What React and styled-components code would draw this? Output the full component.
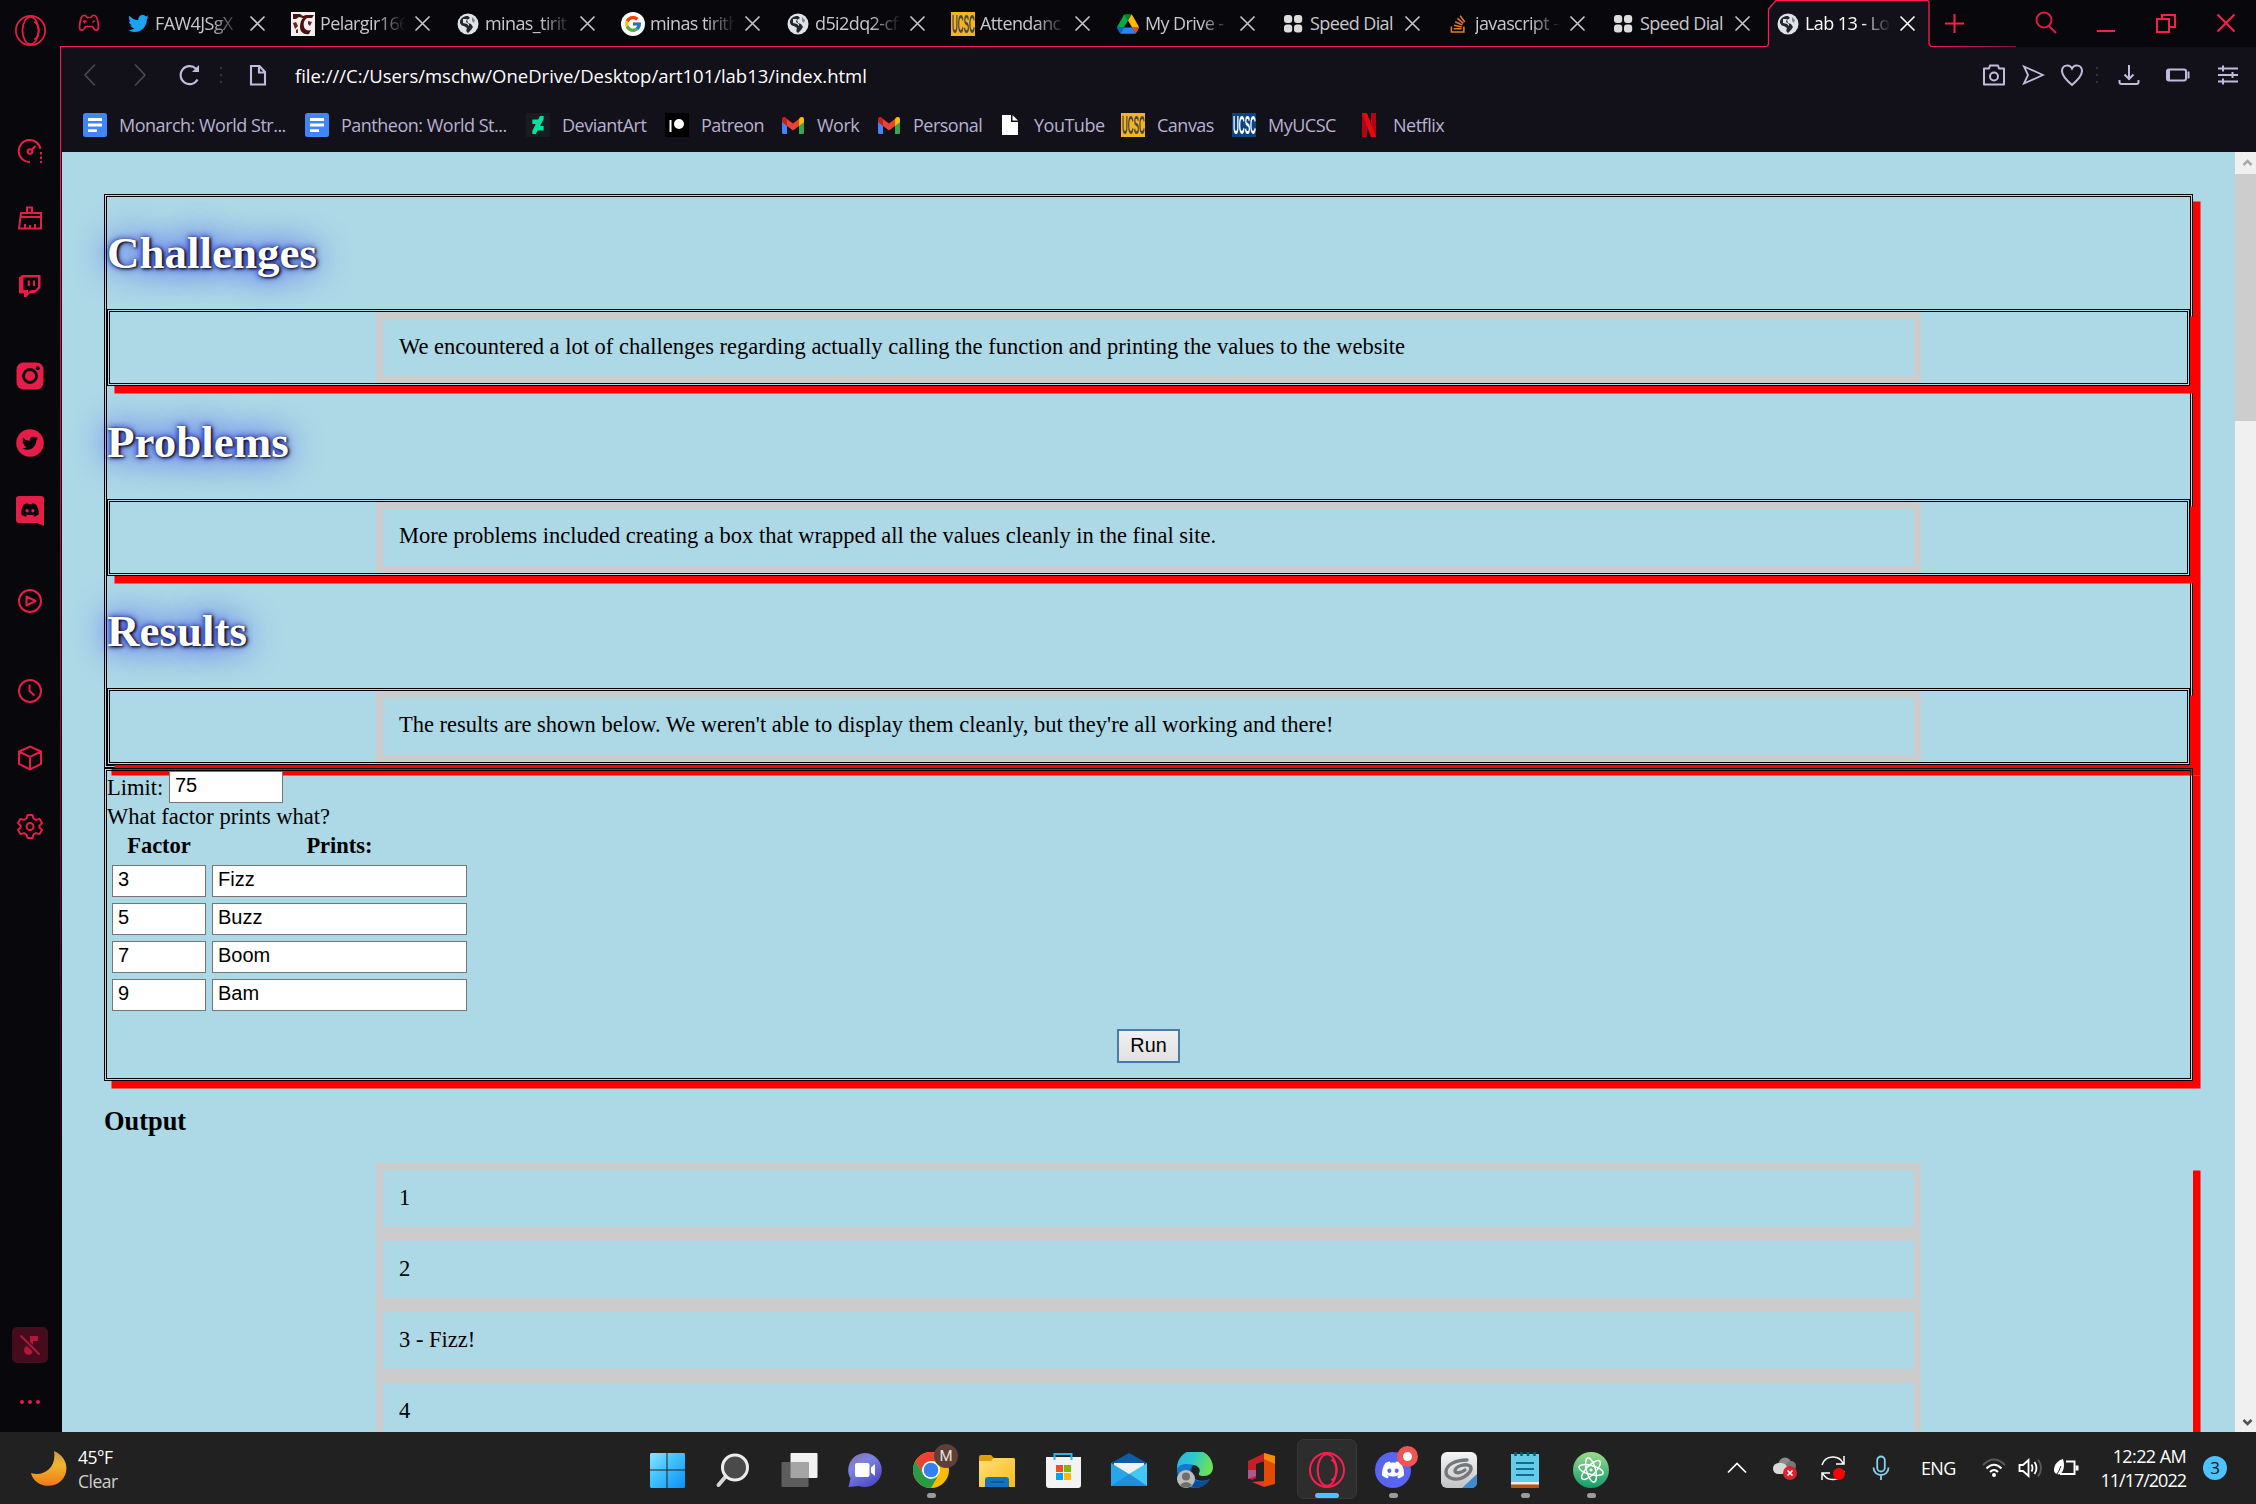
import React from "react";
import styled, { createGlobalStyle, css } from "styled-components";
import {
  FaTwitter, FaInstagram, FaDiscord, FaStackOverflow, FaDeviantart,
} from "react-icons/fa";
import { FcGoogle } from "react-icons/fc";

const ui = `"Open Sans", "Noto Sans", sans-serif`;
const serif = `"Liberation Serif", "Times New Roman", serif`;
const arial = `"Liberation Sans", Arial, sans-serif`;
const red = "#fa1e4e";
const sideRed = "#e61d49";
const lav = "#c3bbdb";

const Global = createGlobalStyle`
  * { box-sizing: border-box; }
  html, body { margin: 0; padding: 0; overflow: hidden; background: #08070b; }
`;

const Screen = styled.div`
  width: 2256px;
  height: 1504px;
  display: grid;
  grid-template-rows: 1432px 72px;
  overflow: hidden;
  font-family: ${ui};
`;
const Browser = styled.div`
  display: grid;
  grid-template-columns: 60px 2196px;
  min-height: 0;
  background: #08070b;
`;

/* Sidebar */
const Sidebar = styled.aside`
  display: flex;
  flex-direction: column;
  align-items: center;
  padding-top: 14px;
  color: ${sideRed};
`;
const SideItem = styled.div`
  display: flex;
  align-items: center;
  justify-content: center;
  height: 32px;
  width: 60px;
  flex: none;
  margin-top: ${(p) => p.$gap || 0}px;
`;
const MuteTile = styled.div`
  width: 36px;
  height: 36px;
  border-radius: 5px;
  background: #440c1c;
  color: #b3183a;
  display: flex;
  align-items: center;
  justify-content: center;
  margin-top: 485px;
`;

/* Browser chrome */
const Main = styled.div`
  display: grid;
  grid-template-rows: 47px 105px 1280px;
  min-width: 0;
`;
const TabBar = styled.div`
  display: flex;
  height: 47px;
  background: linear-gradient(${red}, ${red}) 0 46px / 1707px 1px no-repeat,
    linear-gradient(90deg, ${red}, #7d1530) 1870px 46px / 86px 1px no-repeat, #08070b;
`;
const Pinned = styled.div`
  width: 58px;
  height: 46px;
  padding-left: 18px;
  display: flex;
  align-items: center;
`;
const TabBox = styled.div`
  width: 165px;
  height: 47px;
  padding: 0 0 0 8px;
  display: flex;
  align-items: center;
  color: ${(p) => (p.$active ? "#fff" : "#c9c7cb")};
  position: relative;
`;
const ActiveShape = styled.svg`
  position: absolute;
  left: -1px;
  top: 0;
`;
const TabIcon = styled.div`
  width: 24px;
  height: 24px;
  display: flex;
  align-items: center;
  justify-content: center;
  position: relative;
`;
const TabText = styled.div`
  margin-left: 5px;
  width: 86px;
  height: 28px;
  line-height: 27px;
  font-size: 18px;
  letter-spacing: -0.6px;
  white-space: nowrap;
  position: relative;
  ${(p) => p.$fade && css`mask-image: linear-gradient(90deg, #000 56px, transparent 86px);`}
`;
const TabClose = styled.svg`
  margin-left: 8px;
  position: relative;
`;
const NewTab = styled.svg`margin: 14px 0 0 12px;`;
const WinBtns = styled.div`
  display: flex;
  margin-left: auto;
  height: 46px;
  align-items: center;
  padding-right: 20px;
  gap: 40px;
`;
const SearchBtn = styled.svg`margin-right: -2px;`;

const Bars = styled.div`
  background: #121019;
  border-left: 1px solid ${red};
`;
const AddressBar = styled.div`
  height: 56px;
  display: flex;
  align-items: center;
  padding: 0 17px 0 18px;
  color: ${lav};
`;
const Url = styled.div`
  margin-left: 27px;
  font-size: 18.5px;
  letter-spacing: -0.02px;
  color: #fff;
  white-space: nowrap;
`;
const Spacer = styled.div`flex: 1;`;
const NavIcon = styled.svg`
  flex: none;
  margin-left: ${(p) => p.$ml || 0}px;
`;
const Bookmarks = styled.div`
  display: flex;
  align-items: center;
  height: 44px;
  padding-left: 22px;
`;
const Bookmark = styled.div`
  width: ${(p) => p.$w}px;
  display: flex;
  align-items: center;
  gap: 12px;
  flex: none;
  font-size: 18px;
  letter-spacing: -0.5px;
  color: #b9b0d2;
  white-space: nowrap;
`;
const Favicon = styled.div`
  width: 24px;
  height: 24px;
  flex: none;
  display: flex;
  align-items: center;
  justify-content: center;
  background: ${(p) => p.$bg || "transparent"};
  color: ${(p) => p.$fg || "#fff"};
`;

/* Page viewport */
const Viewport = styled.div`
  display: grid;
  grid-template-columns: 2173px 21px;
  height: 1280px;
  border-left: 1px solid;
  border-image: linear-gradient(${red}, #8c1532 45%, #0a0408 85%) 1;
  padding-left: 1px;
  background: #08070b;
  overflow: hidden;
`;
const Page = styled.div`
  background: #add8e6;
  height: 1280px;
  overflow: hidden;
  padding: 42px 42px 0;
  font-family: ${serif};
  font-size: 22.5px;
  color: #000;
`;
const boxed = css`
  border: 3px double #000;
  box-shadow: 7.5px 7.5px 0 0 #f00;
`;
const Outer = styled.section`
  ${boxed}
  height: 574px;
`;
const Heading = styled.h1`
  margin: 0;
  height: 112.3px;
  padding-top: 29.7px;
  line-height: 52px;
  font-size: 45px;
  font-weight: bold;
  color: #fff;
  text-shadow: 1.4px 1.4px 2.8px #000, 0 0 35px blue, 0 0 7px darkblue;
`;
const Inner = styled.div`
  ${boxed}
  height: 77px;
`;
const Para = styled.p`
  margin: 0 auto;
  width: 1545px;
  height: 71px;
  border: 7px solid #ccc;
  padding: 14.5px 16px;
  line-height: 26px;
  white-space: nowrap;
`;
const Form = styled.section`
  ${boxed}
  height: 313px;
  display: flex;
  flex-direction: column;
`;
const Line = styled.div`
  display: flex;
  align-items: center;
  height: ${(p) => p.$h}px;
  line-height: 25px;
`;
const Field = styled.input`
  width: ${(p) => p.$w}px;
  height: 32px;
  margin: 0;
  padding: 0 5px 3px;
  border: 1px solid #767676;
  border-radius: 0;
  background: #fff;
  color: #000;
  outline: none;
  font: 20px ${arial};
`;
const FactorGrid = styled.div`
  display: grid;
  grid-template-columns: 94px 255px;
  grid-template-rows: 30px repeat(4, 32px);
  column-gap: 6px;
  row-gap: 6px;
  padding: 0 0 0 5px;
`;
const Th = styled.div`
  font-weight: bold;
  text-align: center;
  line-height: 33px;
`;
const RunButton = styled.button`
  align-self: center;
  margin-top: 18px;
  width: 63px;
  height: 34px;
  padding: 0 0 1px;
  font: 19.8px ${arial};
  background: linear-gradient(#f0f0f0, #e1e1e1);
  border: 2px solid #4a7ba6;
  border-radius: 0;
  color: #000;
`;
const OutputTitle = styled.h3`
  margin: 26px 0;
  line-height: 29px;
  height: 30px;
  font-size: 26.4px;
`;
const OutputBox = styled.div`
  box-shadow: 7.5px 7.5px 0 0 #f00;
`;
const Scrollbar = styled.div`
  background: #f0f0f0;
  display: flex;
  flex-direction: column;
  align-items: center;
`;
const Arrow = styled.svg`
  height: 22px;
  width: 21px;
  flex: none;
  padding-left: 2px;
`;
const Thumb = styled.div`
  width: 21px;
  height: 247px;
  background: #cdcdcd;
`;

/* Taskbar */
const Taskbar = styled.footer`
  background: #212121;
  display: grid;
  grid-template-columns: 634px 991px 631px;
  color: #fff;
  font-size: 18px;
`;
const Weather = styled.div`
  display: flex;
  align-items: center;
  padding: 1px 0 0 30px;
  gap: 11px;
  line-height: 24px;
  letter-spacing: -0.5px;
  font-size: 17.5px;
`;
const Dim = styled.div`color: #cfcfcf;`;
const Apps = styled.div`display: flex;`;
const App_ = styled.div`
  width: 66px;
  height: 72px;
  padding-top: 7px;
  display: flex;
  justify-content: center;
`;
const Tile = styled.div`
  width: 60px;
  height: 60px;
  border-radius: 7px;
  display: flex;
  flex-direction: column;
  align-items: center;
  padding-top: ${(p) => (p.$active ? 4 : 5)}px;
  ${(p) => p.$active && css`background: #2d2d2d; border: 1px solid #383838;`}
`;
const TileIcon = styled.div`
  height: 49px;
  flex: none;
  display: flex;
  align-items: flex-start;
  padding-top: 8px;
`;
const Mark = styled.div`
  width: ${(p) => (p.$active ? 24 : 9)}px;
  height: 5px;
  border-radius: 3px;
  background: ${(p) => (p.$active ? "#4cc2ff" : "#9b9b9b")};
`;
const Tray = styled.div`
  display: flex;
  align-items: center;
  padding: 0 29px 0 102px;
`;
const TrayIcon = styled.svg`
  flex: none;
  margin-right: ${(p) => p.$mr}px;
`;
const Lang = styled.div`
  width: 36px;
  margin-right: 25px;
  letter-spacing: -0.7px;
  font-size: 18px;
`;
const Clock = styled.div`
  margin-left: auto;
  text-align: right;
  line-height: 24px;
  letter-spacing: -0.6px;
  font-size: 18px;
  white-space: nowrap;
`;
const DateLine = styled.div`letter-spacing: -1px;`;
const Count = styled.div`
  width: 24px;
  height: 24px;
  margin-left: 17px;
  border-radius: 50%;
  background: #4cc2ff;
  color: #111;
  font-size: 17px;
  line-height: 24px;
  text-align: center;
`;

/* Icons */
const s = (w) => ({ fill: "none", stroke: "currentColor", strokeWidth: w });
const OperaMark = ({ size, color, w = 2 }) => (
  <svg width={size} height={size} viewBox="0 0 36 36" fill="none" stroke={color} strokeWidth={w}>
    <circle cx="18" cy="18" r="17" />
    <ellipse cx="18" cy="18" rx="9.3" ry="15.8" />
    <path d="M22.5 7.5c7 5 7 16 0 21" />
  </svg>
);
const Globe = () => (
  <svg width="22" height="22" viewBox="0 0 22 22">
    <circle cx="11" cy="11" r="10.5" fill="#dfe3e8" />
    <path d="M3 8c1-3 4-5 8-5l2 2-3 2 1 3 3 1 2 3-2 3-3 3c-2-1-2-3-1-5l-3-2c-2 0-3-1-4-3z" fill="#23262b" />
    <path d="M6 6l4 0-1 3 3 2 0 2-2-2-4-1z" fill="#dfe3e8" />
    <path d="M15 4l3 3-1 3-2-2z" fill="#23262b" opacity=".5" />
  </svg>
);
const UcscText = styled.span`
  font: bold 25px/24px "Liberation Sans", sans-serif;
  letter-spacing: -0.5px;
  display: block;
  transform: scaleX(0.33);
`;
const Ucsc = ({ blue }) => (
  <Favicon $bg={blue ? "#0b4484" : "#f4b322"} $fg={blue ? "#fff" : "#4b4a3c"}><UcscText>UCSC</UcscText></Favicon>
);
const SpeedDial = () => (
  <svg width="20" height="20" viewBox="0 0 20 20" fill="#dcdcdc">
    {[[1, 1], [11, 1], [1, 10.5], [11, 10.5]].map(([x, y]) => <rect key={x + "-" + y} x={x} y={y} width="8.2" height="8" rx="3" />)}
  </svg>
);
const Drive = () => (
  <svg width="22" height="20" viewBox="0 0 87.3 78">
    <path fill="#0066da" d="m6.6 66.85 3.85 6.65c.8 1.4 1.95 2.5 3.3 3.3l13.75-23.8h-27.5c0 1.55.4 3.1 1.2 4.5z" />
    <path fill="#00ac47" d="m43.65 25-13.75-23.8c-1.35.8-2.5 1.9-3.3 3.3l-25.4 44a9 9 0 0 0-1.2 4.5h27.5z" />
    <path fill="#ea4335" d="m73.55 76.8c1.35-.8 2.5-1.9 3.3-3.3l1.6-2.75 7.65-13.25c.8-1.4 1.2-2.95 1.2-4.5h-27.5l5.85 11.5z" />
    <path fill="#00832d" d="m43.65 25 13.75-23.8c-1.35-.8-2.9-1.2-4.5-1.2h-18.5c-1.6 0-3.15.45-4.5 1.2z" />
    <path fill="#2684fc" d="m59.8 53h-32.3l-13.75 23.8c1.35.8 2.9 1.2 4.5 1.2h50.8c1.6 0 3.15-.45 4.5-1.2z" />
    <path fill="#ffba00" d="m73.4 26.5-12.7-22c-.8-1.4-1.95-2.5-3.3-3.3l-13.75 23.8 16.15 28h27.45c0-1.55-.4-3.1-1.2-4.5z" />
  </svg>
);
const Pelargir = () => (
  <svg width="24" height="24" viewBox="0 0 24 24">
    <rect width="24" height="24" fill="#f3efee" />
    <path d="M2 2h7l3 2 3-1h8l-2 3h-5c-3 2-4 5-3 9 1 3 4 4 7 3l-2 4c-5 1-9-2-9-7 0-4 1-7 3-9L8 5 5 7H2z" fill="#4a1212" />
    <path d="M2 11l3-1 2 4-3 3zM5 18l2-1v4H5zM17 9l4 1-2 4-2-2z" fill="#6b2424" />
  </svg>
);
const Docs = () => (
  <svg width="24" height="24" viewBox="0 0 24 24">
    <rect width="24" height="24" rx="2.5" fill="#4285f4" />
    <path d="M5 6.5h14M5 12h14M5 17.7h9" stroke="#fff" strokeWidth="2.8" />
  </svg>
);
const Gmail = () => (
  <svg width="22" height="17" viewBox="0 0 22 17">
    <path d="M0 3v12.500a1.500 1.500 0 0 0 1.500 1.500H5V8z" fill="#4285f4" />
    <path d="M22 3v12.500a1.500 1.500 0 0 1-1.500 1.500H17V8z" fill="#34a853" />
    <path d="M17 2v7l5-4V2.200C22 0 19.500-.6 18 .6z" fill="#fbbc04" />
    <path d="M5 9V2l6 4.500L17 2v7l-6 4.500z" fill="#ea4335" />
    <path d="M0 2.200V5l5 4V2L4 .6C2.400-.6 0 0 0 2.200z" fill="#c5221f" />
  </svg>
);
const PatreonMark = () => (
  <svg width="24" height="24"><rect width="24" height="24" /><rect x="4.500" y="7" width="2" height="12" fill="#fff" /><circle cx="14" cy="11" r="5" fill="#fff" /></svg>
);
const WhitePage = () => (
  <svg width="24" height="24"><path d="M4 2h9v7h7v13H4z" fill="#fff" /><path d="M14.500 2v5.500h5.500z" fill="#fff" /></svg>
);
const NetflixMark = () => (
  <svg width="14" height="24" viewBox="0 0 14 24"><path d="M0 0h5v24H0zM9 0h5v24H9z" fill="#b1060f" /><path d="M0 0h5l9 24H9z" fill="#e50914" /></svg>
);

const tabs = [
  [<FaTwitter size={21} color="#1da1f2" />, "FAW4JSgX", 1],
  [<Pelargir />, "Pelargir166", 1],
  [<Globe />, "minas_tirit", 1],
  [<svg width="24" height="24"><circle cx="12" cy="12" r="12" fill="#fff" /><g transform="translate(2.500 2.500)"><FcGoogle size={19} /></g></svg>, "minas tirith", 1],
  [<Globe />, "d5i2dq2-cf", 1],
  [<Ucsc />, "Attendanc", 1],
  [<Drive />, "My Drive -", 1],
  [<SpeedDial />, "Speed Dial", 0],
  [<FaStackOverflow size={20} color="#e87922" />, "javascript -", 1],
  [<SpeedDial />, "Speed Dial", 0],
  [<Globe />, "Lab 13 - Lo", 1],
];
const bookmarks = [
  [222, <Docs />, "Monarch: World Str..."],
  [221, <Docs />, "Pantheon: World St..."],
  [139, <Favicon $bg="#161c20" $fg="#00e59b"><FaDeviantart size={18} /></Favicon>, "DeviantArt"],
  [116, <PatreonMark />, "Patreon"],
  [96, <Favicon><Gmail /></Favicon>, "Work"],
  [121, <Favicon><Gmail /></Favicon>, "Personal"],
  [123, <WhitePage />, "YouTube"],
  [111, <Ucsc />, "Canvas"],
  [125, <Ucsc blue />, "MyUCSC"],
  [120, <Favicon><NetflixMark /></Favicon>, "Netflix"],
];
const sections = [
  ["Challenges", "We encountered a lot of challenges regarding actually calling the function and printing the values to the website"],
  ["Problems", "More problems included creating a box that wrapped all the values cleanly in the final site."],
  ["Results", "The results are shown below. We weren't able to display them cleanly, but they're all working and there!"],
];
const factors = [["3", "Fizz"], ["5", "Buzz"], ["7", "Boom"], ["9", "Bam"]];
const output = ["1", "2", "3 - Fizz!", "4"];

const sideIcons = [
  [0, <OperaMark size={31} color={sideRed} w={2} />],
  [89, <svg width="26" height="26" viewBox="0 0 26 26" {...s(2)}><path d="M13 24A11 11 0 1 1 23.500 11" /><circle cx="13" cy="13.500" r="2.300" /><path d="M14.500 12l4-4" /><path d="M24 14v11" strokeDasharray="2.500 2" /></svg>],
  [35, <svg width="26" height="26" viewBox="0 0 26 26" {...s(2)}><path d="M10 8V2.500h5V8M4 8h20v15.500H2zM3.500 12H24M8 23v-4M13 23v-3M18 23v-4" /></svg>],
  [36, <svg width="22" height="22" viewBox="0 0 22 22"><path d="M0 2.500L3 0H21.500V13L16 18H11L7.500 22H5V18.500H0z" fill="currentColor" /><path d="M4.500 2.500H19V12L16 15H12L9 17.500V15H4.500z" fill="#08070b" /><path d="M9.800 5.500v5.500M15 5.500v5.500" stroke="currentColor" strokeWidth="2" /></svg>],
  [58, <FaceCamera />],
  [35, <svg width="28" height="28" viewBox="0 0 28 28"><circle cx="14" cy="14" r="13.800" fill="currentColor" /><g transform="translate(6 6.300)" color="#08070b"><FaTwitter size={16} /></g></svg>],
  [36, <svg width="28" height="30" viewBox="0 0 28 30"><path d="M3 0h22a3 3 0 0 1 3 3v27l-7-3H3a3 3 0 0 1-3-3V3a3 3 0 0 1 3-3z" fill="currentColor" /><g transform="translate(4.500 4.500)" color="#08070b"><FaDiscord size={19} /></g></svg>],
  [58, <svg width="26" height="26" viewBox="0 0 26 26" {...s(2)}><circle cx="13" cy="13" r="11" /><path d="M9.500 8.500v9l9-4.500z" strokeLinejoin="round" /></svg>],
  [58, <svg width="26" height="26" viewBox="0 0 26 26" {...s(2)}><circle cx="13" cy="13" r="11" /><path d="M12.500 6.500V13l5 4.500" /></svg>],
  [35, <svg width="26" height="26" viewBox="0 0 26 26" {...s(2)}><path d="M13 1.500l11 5v12.500l-11 5.500-11-5.500V6.500zM2 6.500l11 5.500 11-5.500M13 12v12" /></svg>],
  [36, <svg width="26" height="26" viewBox="0 0 26 26" {...s(2)}><path d="M10.500 2h5l1 3.500 2.500 1.400 3.600-1 2.400 4.200-2.600 2.600v1.600l2.600 2.600-2.400 4.200-3.600-1-2.500 1.400-1 3.500h-5l-1-3.500L7 20.100l-3.600 1L1 16.900l2.600-2.600v-1.600L1 10.100l2.400-4.200 3.600 1 2.500-1.400z" strokeLinejoin="round" /><circle cx="13" cy="13.500" r="3.500" /></svg>],
];

function FaceCamera() {
  return (
    <svg width="28" height="28" viewBox="0 0 28 28"><rect x=".5" y=".5" width="27" height="27" rx="7" fill="currentColor" /><circle cx="14" cy="14" r="6.500" fill="none" stroke="#08070b" strokeWidth="2.800" /><circle cx="21.800" cy="6.200" r="2" fill="#08070b" /></svg>
  );
}

const Win = () => (
  <svg width="36" height="36" viewBox="0 0 36 36">
    <defs><linearGradient id="wn" x2="1" y2="1"><stop stopColor="#8fe3ff" /><stop offset=".4" stopColor="#45c5ff" /><stop offset="1" stopColor="#0a8ff5" /></linearGradient></defs>
    <path d="M2 1h15.500v16.500H1V2zM18.500 1H35l1 1v15.500H18.500zM1 18.500h16.500V36H2l-1-1zM18.500 18.500H36V35l-1 1H18.500z" fill="url(#wn)" />
  </svg>
);
const SearchApp = () => (
  <svg width="36" height="36"><path d="M12 23L3.500 33" stroke="#d6d6d6" strokeWidth="4" strokeLinecap="round" /><circle cx="20" cy="15.500" r="12.500" fill="#4a4a4a" stroke="#ececec" strokeWidth="3" /></svg>
);
const TaskView = () => (
  <svg width="38" height="36"><rect x="10.500" y="1" width="27" height="25" rx="1" fill="#f1f1f1" /><rect x="1.500" y="10" width="27" height="25" rx="1" fill="#5d5d5d" /><path d="M10.500 10h18v16h-18z" fill="#a5a5a5" /></svg>
);
const Chat = () => (
  <svg width="36" height="36"><defs><linearGradient id="ct" x2=".6" y2="1"><stop stopColor="#8d6a9f" /><stop offset=".4" stopColor="#7d83e4" /><stop offset="1" stopColor="#4e4fc4" /></linearGradient></defs><path d="M18 1a17 17 0 1 1-6 33L1.500 35l2-8.500A17 17 0 0 1 18 1z" fill="url(#ct)" /><rect x="8" y="11" width="14.500" height="14" rx="2" fill="#fff" /><path d="M24 15.500l4-3.500v12l-4-3.500z" fill="#fff" /></svg>
);
const ProfileLetter = styled.span`
  position: absolute;
  left: 21px;
  top: -8px;
  width: 24px;
  height: 24px;
  border-radius: 50%;
  background: #5d4037;
  color: #e8e0dd;
  font: 15px/24px Roboto, sans-serif;
  text-align: center;
`;
const Stack = styled.div`position: relative; width: 36px; height: 36px;`;
const Chrome = () => (
  <Stack>
    <svg width="36" height="36" viewBox="0 0 36 36"><circle cx="18" cy="18" r="18" fill="#fbbc04" /><path d="M2.400 9A18 18 0 0 1 33.600 9H18L10.200 22.500z" fill="#ea4335" /><path d="M2.400 9A18 18 0 0 0 18 36l7.800-13.500H10.200z" fill="#2a9a48" /><circle cx="18" cy="18" r="9" fill="#fff" /><circle cx="18" cy="18" r="7.300" fill="#3380ee" /></svg>
    <ProfileLetter>M</ProfileLetter>
  </Stack>
);
const Folder = () => (
  <svg width="36" height="36"><defs><linearGradient id="fd" x2="1" y2="1"><stop stopColor="#ffdf7d" /><stop offset="1" stopColor="#f8bc14" /></linearGradient></defs><path d="M0 5q0-2 2-2h10l3 3h19q2 0 2 2v4H0z" fill="#e0a000" /><path d="M0 9h12l3-3h19q2 0 2 2v27H0z" fill="url(#fd)" /><path d="M6 35v-7q0-3 3-3h18q3 0 3 3v7z" fill="#1173c4" /><path d="M11 30h14" stroke="#0b4f92" strokeWidth="1.500" /></svg>
);
const Store = () => (
  <svg width="36" height="37"><path d="M1 5h35v28q0 3-3 3H4q-3 0-3-3z" fill="#f3f3f3" /><path d="M9.500 8V2h17v6" fill="none" stroke="#29b6ef" strokeWidth="2" /><path d="M11 13h7v7h-7z" fill="#f25022" /><path d="M19 13h7v7h-7z" fill="#7fba00" /><path d="M11 21h7v7h-7z" fill="#00a4ef" /><path d="M19 21h7v7h-7z" fill="#ffb900" /></svg>
);
const Mail = () => (
  <svg width="36" height="36"><path d="M0 11L18 1l18 10v8H0z" fill="#0a5ba8" /><path d="M3 11h30v11H3z" fill="#f1f1f1" /><path d="M0 11l36 22v1H0z" fill="#28a6e8" /><path d="M36 11L18 22l18 12z" fill="#41c8f5" /><path d="M0 34h36L18 22z" fill="#1f8fdc" /></svg>
);
const Edge = () => (
  <svg width="36" height="36"><defs><linearGradient id="eg" x2="1" y2=".3"><stop stopColor="#2bb2e6" /><stop offset=".5" stopColor="#2cc8cf" /><stop offset="1" stopColor="#6be05a" /></linearGradient></defs><path d="M0 17C2 9 11 8 17 12c-3 3-4 8-1 13 3 4 10 5 17 2-4 6-9 9-15 9A18 18 0 0 1 0 17z" fill="#1577cf" /><path d="M16 13c-5 6-3 14 4 16 5 1 9 0 13-2-4 6-9 9-15 9-8-3-9-16-2-23z" fill="#0d4c94" /><path d="M0 17A18 18 0 0 1 36 15c0 6-4 9-9 9-4 0-6-1-5-3 2-3 0-7-5-8C9 11 2 12 0 17z" fill="url(#eg)" /><circle cx="9" cy="27" r="9" fill="#bdbdbd" /><circle cx="9" cy="24.500" r="4" fill="#6f6f6f" /><path d="M3 33q6-6 12 0-6 5-12 0z" fill="#6f6f6f" /></svg>
);
const Office = () => (
  <svg width="28" height="36"><path d="M1 9L18 1v8l-9 3v14l-4 2-4-2z" fill="#c22025" /><path d="M1 18v9l8-3v-6z" fill="#b0568f" /><path d="M17 1l11 3v28l-11 3z" fill="#e24a05" /><path d="M17 1l11 3v8l-11-5z" fill="#f58a0a" /><path d="M5 30l12-1v6z" fill="#e3373c" /></svg>
);
const Badge = styled.span`
  position: absolute;
  left: 22px;
  top: -6px;
  width: 21px;
  height: 21px;
  border-radius: 50%;
  border: 6px solid #ef5555;
  background: #fff;
`;
const DiscordApp = () => (
  <Stack><svg width="36" height="36"><circle cx="18" cy="18" r="18" fill="#5765f2" /><g transform="translate(6 6)" color="#fff"><FaDiscord size={24} /></g></svg><Badge /></Stack>
);
const ClipStudio = () => (
  <svg width="36" height="36"><defs><linearGradient id="cs" y2="1" x2="0"><stop stopColor="#f5f5f5" /><stop offset="1" stopColor="#c4c4c4" /></linearGradient></defs><rect width="36" height="36" rx="6" fill="url(#cs)" /><path d="M36 22v8q0 6-6 6h-9z" fill="#3f8bd0" /><path d="M26 8C14 8 5 13 5 20c0 7 11 9 18 5 5-3 9-8 6-11-4-3-15 0-15 5 0 3 6 2 10-1" fill="none" stroke="#75787b" strokeWidth="3.400" strokeLinecap="round" /></svg>
);
const Notepad = () => (
  <svg width="28" height="36"><path d="M0 2h28v28H0z" fill="#64cbe8" /><path d="M0 30h28v3H0z" fill="#eee" /><path d="M0 32.500h28V36H0z" fill="#b9540f" /><path d="M4.500 0v4M10.500 0v4M17 0v4M23.500 0v4" stroke="#0b5a7c" strokeWidth="2.500" /><path d="M5 11h18M5 17h18M5 23h18" stroke="#0b6d91" strokeWidth="2" /></svg>
);
const Atom = () => (
  <svg width="36" height="36"><defs><linearGradient id="at" y2="1" x2="0"><stop stopColor="#9adb8a" /><stop offset="1" stopColor="#149c6a" /></linearGradient></defs><circle cx="18" cy="18" r="18" fill="url(#at)" /><g fill="none" stroke="#fff" strokeWidth="1.500">{[15, 75, 135].map((r) => <ellipse key={r} cx="18" cy="18" rx="12.500" ry="4.500" transform={`rotate(${r} 18 18)`} />)}</g><circle cx="18" cy="18" r="1.600" fill="#fff" /></svg>
);
const apps = [
  [<Win />], [<SearchApp />], [<TaskView />], [<Chat />], [<Chrome />, 1], [<Folder />], [<Store />], [<Mail />], [<Edge />],
  [<Office />], [<OperaMark size={36} color={red} w={2} />, 2], [<DiscordApp />, 1], [<ClipStudio />], [<Notepad />, 1], [<Atom />, 1],
];

function Tab({ icon, text, fade, active }) {
  return (
    <TabBox $active={active}>
      {active && (
        <ActiveShape width="164" height="47">
          <path d="M0 47V46L1.500 44V9L9 0.500H160.500L162 2V44L164 46V47z" fill="#121019" />
          <path d="M0 46.500L1.500 44V9L9 0.500H160.500L162 2V44L164 46.500" fill="none" stroke={red} strokeWidth="1.300" />
        </ActiveShape>
      )}
      <TabIcon>{icon}</TabIcon>
      <TabText $fade={fade}>{text}</TabText>
      <TabClose width="17" height="17" {...s(1.6)}><path d="M1.500 1.500l14 14M15.500 1.500l-14 14" /></TabClose>
    </TabBox>
  );
}

export default function App() {
  return (
    <Screen>
      <Global />
      <Browser>
        <Sidebar>
          {sideIcons.map(([gap, icon], i) => <SideItem key={i} $gap={gap}>{icon}</SideItem>)}
          <MuteTile>
            <svg width="22" height="22"><path d="M11 2h8v5h-5v9a4.500 4.500 0 1 1-3-4z" fill="currentColor" /><path d="M1.500 2L20 20.500" stroke="#440c1c" strokeWidth="5" /><path d="M1.500 1.500L20.500 20.500" stroke="currentColor" strokeWidth="2" /></svg>
          </MuteTile>
          <SideItem $gap={23}>
            <svg width="22" height="6" fill="currentColor"><circle cx="3" cy="3" r="2" /><circle cx="11" cy="3" r="2" /><circle cx="19" cy="3" r="2" /></svg>
          </SideItem>
        </Sidebar>
        <Main>
          <TabBar>
            <Pinned>
              <svg width="22" height="18" viewBox="0 0 22 18" {...s(1.7)} color={sideRed}><path d="M5.500 1.500h2L9 3.500h4l1.500-2h2c2 0 4 5 4 12.500-.5 2.500-3 3-4.500 1l-1.500-2.500h-7L6 15c-1.500 2-4 1.500-4.500-1 0-7.500 2-12.500 4-12.500z" /><path d="M5 7.500h3.500M6.700 6v3.500M14.500 8.500l2-2" strokeWidth="1.500" /></svg>
            </Pinned>
            {tabs.map(([icon, text, fade], i) => <Tab key={i} icon={icon} text={text} fade={fade} active={i === 10} />)}
            <NewTab width="19" height="19" {...s(2)} color={red}><path d="M9.500 0v19M0 9.500h19" /></NewTab>
            <WinBtns>
              <SearchBtn width="24" height="24" {...s(2)} color="#d81c45"><circle cx="10" cy="9" r="7.500" /><path d="M15 15l7 7" /></SearchBtn>
              <svg width="20" height="20" {...s(2)} color={red}><path d="M1 18h18" /></svg>
              <svg width="20" height="20" {...s(2)} color={red}><path d="M1 6h12v13H1zM6 6V2h13v12h-6" /></svg>
              <svg width="20" height="20" {...s(2)} color={red}><path d="M1.500 1.500l17 17M18.500 1.500l-17 17" /></svg>
            </WinBtns>
          </TabBar>
          <Bars>
            <AddressBar>
              <NavIcon $ml={3} width="16" height="24" {...s(1.6)} color="#4b4857"><path d="M13 1.500L3 12l10 10.500" /></NavIcon>
              <NavIcon $ml={34} width="16" height="24" {...s(1.6)} color="#4b4857"><path d="M3 1.500L13 12 3 22.500" /></NavIcon>
              <NavIcon $ml={30} width="24" height="24" {...s(2.1)}><path d="M19.500 16.500A9 9 0 1 1 18 5.800" /><path d="M21 2v7h-7z" fill="currentColor" stroke="none" /></NavIcon>
              <NavIcon $ml={17} width="4" height="18" color="#34303f" {...s(2)}><path d="M2 1v16" strokeDasharray="2 5" /></NavIcon>
              <NavIcon $ml={25} width="20" height="24" {...s(2.1)}><path d="M3 3h8.500l5.500 6v12.500H3zM11 3v6.500h6" /></NavIcon>
              <Url>file:///C:/Users/mschw/OneDrive/Desktop/art101/lab13/index.html</Url>
              <Spacer />
              <NavIcon width="24" height="24" {...s(2)}><path d="M2 5.500h5l1-3h8l1 3h5v16H2z" strokeLinejoin="round" /><circle cx="12" cy="13.500" r="4" /></NavIcon>
              <NavIcon $ml={15} width="24" height="24" {...s(1.8)}><path d="M3 3.500L22 12 3 20.500 7 12z" /></NavIcon>
              <NavIcon $ml={15} width="24" height="24" {...s(2)}><path d="M12 22C5 16 2 12 2 8c0-6 7.500-7.500 10-2.500C14.500.5 22 2 22 8c0 4-3 8-10 14z" /></NavIcon>
              <NavIcon $ml={11} width="4" height="18" color="#34303f" {...s(2)}><path d="M2 1v16" strokeDasharray="2 5" /></NavIcon>
              <NavIcon $ml={19} width="22" height="24" {...s(2)}><path d="M11 2v14M6.500 11.500L11 16l4.500-4.500M1.500 17v2q0 2 2 2h15q2 0 2-2v-2" /></NavIcon>
              <NavIcon $ml={25} width="26" height="24" {...s(2)}><rect x="2" y="6.500" width="19" height="11" rx="2" /><path d="M3.500 7v10" strokeWidth="3" /><path d="M23.500 8.500v7" /></NavIcon>
              <NavIcon $ml={26} width="22" height="24" {...s(2)}><path d="M1 5.500h20M1 12h20M1 18.500h20M6 2.500v6M15.500 9v6M6 15.500v6" /></NavIcon>
            </AddressBar>
            <Bookmarks>
              {bookmarks.map(([w, icon, text]) => <Bookmark key={text} $w={w}>{icon}<span>{text}</span></Bookmark>)}
            </Bookmarks>
          </Bars>
          <Viewport>
            <Page>
              <Outer>
                {sections.map(([title, text]) => (
                  <React.Fragment key={title}>
                    <Heading>{title}</Heading>
                    <Inner><Para>{text}</Para></Inner>
                  </React.Fragment>
                ))}
              </Outer>
              <Form>
                <Line $h={32}>Limit:&nbsp;<Field $w={114} defaultValue="75" /></Line>
                <Line $h={26}>What factor prints what?</Line>
                <FactorGrid>
                  <Th>Factor</Th>
                  <Th>Prints:</Th>
                  {factors.map(([n, word]) => (
                    <React.Fragment key={n}>
                      <Field $w={94} defaultValue={n} />
                      <Field $w={255} defaultValue={word} />
                    </React.Fragment>
                  ))}
                </FactorGrid>
                <RunButton>Run</RunButton>
              </Form>
              <OutputTitle>Output</OutputTitle>
              <OutputBox>
                {output.map((t) => <Para key={t}>{t}</Para>)}
              </OutputBox>
            </Page>
            <Scrollbar>
              <Arrow fill="none" stroke="#a9a9a9" strokeWidth="2.500"><path d="M6.500 13l4-4 4 4" /></Arrow>
              <Thumb />
              <Spacer />
              <Arrow fill="none" stroke="#505050" strokeWidth="2.500"><path d="M6.500 10l4 4 4-4" /></Arrow>
            </Scrollbar>
          </Viewport>
        </Main>
      </Browser>
      <Taskbar>
        <Weather>
          <svg width="37" height="37"><defs><linearGradient id="mn" x2="0" y2="1"><stop stopColor="#c99a4a" /><stop offset=".4" stopColor="#f0b52e" /><stop offset="1" stopColor="#f07a18" /></linearGradient></defs><path d="M24 1C38 7 40 22 31 31 21 40 4 36 1 23c11 4 26-4 23-22z" fill="url(#mn)" /></svg>
          <div><div>45°F</div><Dim>Clear</Dim></div>
        </Weather>
        <Apps>
          {apps.map(([icon, mark], i) => (
            <App_ key={i}>
              <Tile $active={mark === 2}>
                <TileIcon>{icon}</TileIcon>
                {mark && <Mark $active={mark === 2} />}
              </Tile>
            </App_>
          ))}
        </Apps>
        <Tray>
          <TrayIcon $mr={25} width="20" height="12" fill="none" stroke="#fff" strokeWidth="1.700"><path d="M1 10.500l9-9 9 9" /></TrayIcon>
          <TrayIcon $mr={22} width="26" height="24"><circle cx="13" cy="8" r="6.500" fill="#8b8b8b" /><circle cx="19" cy="10" r="5" fill="#777" /><rect x="1" y="7" width="14" height="11" rx="5.500" fill="#d9d9d9" /><circle cx="18" cy="17" r="7" fill="#d9232e" /><path d="M15.500 14.500l5 5M20.500 14.500l-5 5" stroke="#fff" strokeWidth="1.700" /></TrayIcon>
          <TrayIcon $mr={26} width="26" height="26" fill="none" stroke="#fff" strokeWidth="1.500"><path d="M2 10A11.500 11.500 0 0 1 23.500 9M24 1v8h-8M24 16A11.500 11.500 0 0 1 2.500 18M2 25v-7h8" /><circle cx="19" cy="19" r="6" fill="#f00" stroke="none" /></TrayIcon>
          <TrayIcon $mr={31} width="18" height="26" fill="none" stroke="#82d3ee" strokeWidth="1.800"><rect x="5.200" y="1.500" width="7.600" height="15" rx="3.800" /><path d="M1.500 12.500c0 10 15 10 15 0M9 20v5" /></TrayIcon>
          <Lang>ENG</Lang>
          <TrayIcon $mr={12} width="24" height="20" fill="none" stroke="#fff" strokeWidth="2"><path d="M1 7q11-11 22 0" stroke="#5a5a5a" /><path d="M4.500 10.500q7.500-7.500 15 0M8 14q4-4 8 0" /><circle cx="12" cy="17" r="2" fill="#fff" stroke="none" /></TrayIcon>
          <TrayIcon $mr={11} width="25" height="20" fill="none" stroke="#fff" strokeWidth="1.800"><path d="M1.500 7H5l5.500-5v16L5 13H1.500zM13.500 6.500q2 3.500 0 7M16.500 4q4 6 0 12" /><path d="M20 1.500q6 8.500 0 17" stroke="#5a5a5a" /></TrayIcon>
          <svg width="25" height="20" fill="none" stroke="#fff" strokeWidth="1.900"><path d="M12 3.500h8.500v12.500H6" /><path d="M23 7.500v5" strokeWidth="3" /><path d="M9 1C3 3 0 7 0 12q0 3 3 4l2 .5c5-2 6-9 4-15.500z" fill="#fff" stroke="none" /><path d="M1.500 18Q5 14 7 8" stroke="#212121" strokeWidth="1" /></svg>
          <Clock><div>12:22 AM</div><DateLine>11/17/2022</DateLine></Clock>
          <Count>3</Count>
        </Tray>
      </Taskbar>
    </Screen>
  );
}
